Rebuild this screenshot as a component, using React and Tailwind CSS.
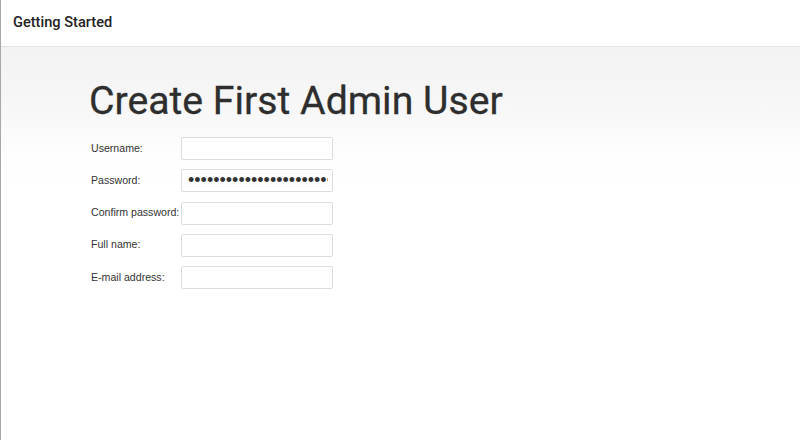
export default function App() {
  const rows = [
    { label: "Username:", type: "text", value: "" },
    { label: "Password:", type: "password", value: "aaaaaaaaaaaaaaaaaaaaaaaaaaaaaa" },
    { label: "Confirm password:", type: "password", value: "" },
    { label: "Full name:", type: "text", value: "" },
    { label: "E-mail address:", type: "text", value: "" },
  ];
  return (
    <div className="w-[800px] h-[440px] overflow-hidden bg-white border-l border-[#a8a8a8] flex flex-col">
      <div className="h-[47px] shrink-0 border-b border-[#e2e2e2] bg-white flex items-center pl-[12px] pb-[2px]">
        <span className="text-[14.6px] font-medium text-[#222] font-['Roboto',sans-serif] leading-none">
          Getting Started
        </span>
      </div>
      <div className="flex-1 bg-[linear-gradient(to_bottom,#f3f3f3_0px,#f6f6f6_50px,#fafafa_85px,#fefefe_110px,#ffffff_140px)] pl-[88px] pt-[30px]">
        <h1 className="text-[39.2px] leading-[48px] text-[#2e2e2e] font-['Roboto',sans-serif] font-normal [-webkit-text-stroke:0.3px_#2e2e2e]">
          Create First Admin User
        </h1>
        <div className="mt-[12px] flex flex-col gap-[9.3px] font-['Liberation_Sans',Arial,sans-serif]">
          {rows.map((r) => (
            <div key={r.label} className="flex items-center h-[23px]">
              <label className="w-[92px] pl-[2px] text-[10.6px] text-[#333] whitespace-nowrap">{r.label}</label>
              <input
                type={r.type}
                defaultValue={r.value}
                readOnly
                className={
                  "w-[152px] h-[23px] border border-[#dcdcdc] rounded-[2px] bg-white text-[#333] outline-none " +
                  (r.type === "password" ? "text-[18px] pl-[6px] pr-[4px]" : "text-[12px] px-[5px]")
                }
              />
            </div>
          ))}
        </div>
      </div>
    </div>
  );
}
